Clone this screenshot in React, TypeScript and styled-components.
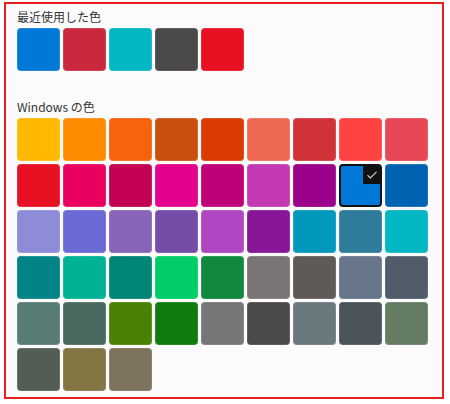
import styled, { createGlobalStyle } from "styled-components";

const recentColors = ["#0078D7", "#C9283E", "#00B7C3", "#4C4A48", "#E81123"];

const windowsColors = [
  "#FFB900", "#FF8C00", "#F7630C", "#CA5010", "#DA3B01", "#EF6950", "#D13438", "#FF4343", "#E74856",
  "#E81123", "#EA005E", "#C30052", "#E3008C", "#BF0077", "#C239B3", "#9A0089", "#0078D7", "#0063B1",
  "#8E8CD8", "#6B69D6", "#8764B8", "#744DA9", "#B146C2", "#881798", "#0099BC", "#2D7D9A", "#00B7C3",
  "#038387", "#00B294", "#018574", "#00CC6A", "#10893E", "#7A7574", "#5D5A58", "#68768A", "#515C6B",
  "#567C73", "#486860", "#498205", "#107C10", "#767676", "#4C4A48", "#69797E", "#4A5459", "#647C64",
  "#525E54", "#847545", "#7E735F",
];

const SELECTED = 16;

export default function App() {
  return (
    <>
      <GlobalStyle />
      <Frame>
        <Heading>最近使用した色</Heading>
        <Grid>
          {recentColors.map((c, i) => (
            <Swatch key={i} $color={c} />
          ))}
        </Grid>
        <Heading $spaced>Windows の色</Heading>
        <Grid>
          {windowsColors.map((c, i) =>
            i === SELECTED ? (
              <SelectedSwatch key={i} $color={c}>
                <CheckBadge>
                  <svg width="12" height="10" viewBox="0 0 12 10">
                    <path d="M1.5 5.2 L4.4 8 L10.5 1.8" fill="none" stroke="#d0d0d0" strokeWidth="1.2" />
                  </svg>
                </CheckBadge>
              </SelectedSwatch>
            ) : (
              <Swatch key={i} $color={c} />
            )
          )}
        </Grid>
      </Frame>
    </>
  );
}

const GlobalStyle = createGlobalStyle`
  html, body {
    margin: 0;
    padding: 0;
    background: #ffffff;
  }
  body {
    font-family: "Noto Sans CJK JP", "Noto Sans", sans-serif;
  }
`;

const Frame = styled.div`
  box-sizing: border-box;
  width: 440px;
  height: 397px;
  margin: 2px 0 0 4px;
  border: 2px solid #ea1c24;
  background: #fbfbfb;
  padding: 2px 11px 0 11px;
`;

const Heading = styled.div<{ $spaced?: boolean }>`
  font-size: 12px;
  line-height: 18px;
  color: #333333;
  padding-top: 2px;
  margin-top: ${(p) => (p.$spaced ? "25px" : "0")};
  margin-bottom: 2px;
`;

const Grid = styled.div`
  display: grid;
  grid-template-columns: repeat(9, 43px);
  grid-auto-rows: 43px;
  gap: 3px;
`;

const Swatch = styled.div<{ $color: string }>`
  box-sizing: border-box;
  border-radius: 4px;
  background: ${(p) => p.$color};
  box-shadow: inset 0 0 0 1px rgba(255, 255, 255, 0.12);
`;

const SelectedSwatch = styled.div<{ $color: string }>`
  position: relative;
  box-sizing: border-box;
  border-radius: 4px;
  border: 2px solid #111111;
  background: ${(p) => p.$color};
  overflow: hidden;
`;

const CheckBadge = styled.div`
  position: absolute;
  top: 0;
  right: 0;
  width: 17px;
  height: 18px;
  background: #111111;
  display: flex;
  align-items: center;
  justify-content: center;
`;
